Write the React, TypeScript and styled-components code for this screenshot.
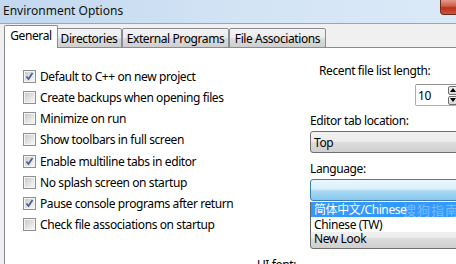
import React from 'react';
import styled, {createGlobalStyle} from 'styled-components';

const GlobalStyle = createGlobalStyle`
  html, body {
    margin: 0;
    padding: 0;
  }
  body {
    width: 456px;
    height: 264px;
    overflow: hidden;
    background: #f0f0f0;
    font-family: "Noto Sans", "Noto Sans CJK SC", sans-serif;
    font-size: 12px;
    letter-spacing: -0.4px;
    color: #000;
  }
`;

const Window = styled.div`
  display: flex;
  flex-direction: column;
  width: 456px;
  height: 264px;
  overflow: hidden;
  background: #f0f0f0;
`;

const TitleBar = styled.div`
  flex: none;
  height: 23px;
  display: flex;
  justify-content: space-between;
  align-items: flex-start;
  background: linear-gradient(to right, #c2d8ef, #d3e4f5 55%, #dbe9f7);
  border-bottom: 1px solid #9aa6b4;
`;

const Title = styled.span`
  padding: 3px 0 0 3px;
  line-height: 16px;
  letter-spacing: 0;
  color: #111;
`;

const CloseButton = styled.div`
  width: 15px;
  height: 14px;
  border: 1px solid #6d2a20;
  border-top: none;
  border-right: none;
  border-radius: 0 0 0 4px;
  background: linear-gradient(#e39a8c, #cf5a44 45%, #b8321d 55%, #c9533c);
`;

const TabStrip = styled.div`
  flex: none;
  height: 23px;
  display: flex;
  align-items: flex-end;
  padding-left: 4px;
`;

const Tab = styled.div<{$w: number; $active?: boolean}>`
  position: relative;
  box-sizing: border-box;
  width: ${p => p.$w}px;
  height: ${p => (p.$active ? 23 : 20)}px;
  margin: 0 ${p => (p.$active ? -2 : 0)}px -1px;
  z-index: ${p => (p.$active ? 1 : 0)};
  display: flex;
  align-items: center;
  justify-content: center;
  padding-bottom: ${p => (p.$active ? 3 : 0)}px;
  border: 1px solid #898c95;
  border-bottom: ${p => (p.$active ? 'none' : '1px solid #898c95')};
  border-radius: 2px 2px 0 0;
  background: ${p => (p.$active ? '#fff' : 'linear-gradient(#f3f3f3, #ebebeb 50%, #dddddd 50%, #cfcfcf)')};
  white-space: nowrap;
  &:first-child {
    margin-left: 0;
  }
`;

const Body = styled.div`
  flex: 1;
  display: grid;
  grid-template-columns: 305px 160px;
  grid-template-rows: auto auto;
  align-content: start;
  background: #fff;
  border-top: 1px solid #898c95;
  border-left: 1px solid #898c95;
  margin-left: 4px;
`;

const CheckList = styled.div`
  display: flex;
  flex-direction: column;
  padding: 18px 0 0 18px;
`;

const CheckRow = styled.label`
  display: flex;
  align-items: center;
  gap: 4px;
  height: 21.15px;
  white-space: nowrap;
`;

const Box = styled.span`
  box-sizing: border-box;
  width: 13px;
  height: 13px;
  flex: none;
  border: 1px solid #8e8f8f;
  padding: 1px;
  background: #f4f4f4;
  display: flex;
`;

const BoxInner = styled.span`
  flex: 1;
  background: linear-gradient(135deg, #cbcbcb, #f6f6f6);
  display: flex;
  align-items: center;
  justify-content: center;
`;

const RightCol = styled.div`
  display: flex;
  flex-direction: column;
  align-items: flex-start;
`;

const Label = styled.div<{$top: number; $left?: number}>`
  margin: ${p => p.$top}px 0 0 ${p => p.$left ?? 0}px;
  line-height: 16px;
  white-space: nowrap;
`;

const SpinBox = styled.div`
  box-sizing: border-box;
  margin: 5px 0 0 105px;
  width: 60px;
  height: 22px;
  display: flex;
  align-items: center;
  border: 1px solid #abadb3;
  border-top-color: #8e8f8f;
  border-radius: 2px;
  background: #fff;
  padding-left: 2px;
`;

const SpinValue = styled.span`
  width: 30px;
`;

const SpinButtons = styled.div`
  display: flex;
  flex-direction: column;
  gap: 1px;
`;

const SpinButton = styled.div`
  box-sizing: border-box;
  width: 10px;
  height: 9px;
  border: 1px solid #707070;
  border-radius: 2px;
  background: linear-gradient(#f2f2f2, #d6d6d6);
  display: flex;
  align-items: center;
  justify-content: center;
`;

const Combo = styled.div<{$hot?: boolean; $top: number}>`
  box-sizing: border-box;
  position: relative;
  margin-top: ${p => p.$top}px;
  width: 170px;
  height: 22px;
  display: flex;
  align-items: center;
  padding-left: 3px;
  border: 1px solid ${p => (p.$hot ? '#3c7fb1' : '#707070')};
  border-radius: 3px;
  background: ${p =>
    p.$hot
      ? 'linear-gradient(#eaf6fd, #d9f0fc 45%, #a9d9f4 55%, #88c8ec)'
      : 'linear-gradient(#f2f2f2, #ebebeb 50%, #dddddd 50%, #cfcfcf)'};
  ${p => (p.$hot ? 'z-index: 2;' : '')}
`;

const DropList = styled.div`
  position: absolute;
  left: -1px;
  top: 22px;
  width: 170px;
  background: #fff;
  border-left: 1px solid #646464;
  display: flex;
  flex-direction: column;
`;

const DropItem = styled.div<{$selected?: boolean}>`
  position: relative;
  height: 15px;
  line-height: 15px;
  padding-left: 3px;
  white-space: nowrap;
  color: ${p => (p.$selected ? '#fff' : '#000')};
  background: ${p => (p.$selected ? '#3399ff' : '#fff')};
`;

const Watermark = styled.span`
  position: absolute;
  left: 92px;
  top: 1px;
  font-size: 13px;
  line-height: 15px;
  color: rgba(255, 255, 255, 0.35);
  letter-spacing: 1px;
  pointer-events: none;
`;

const FontRow = styled.div`
  grid-column: 1 / 3;
  padding: 8px 0 0 252px;
  line-height: 16px;
`;

const CheckMark = () => (
  <svg width="9" height="9" viewBox="0 0 9 9">
    <path d="M1.5 4.5 L3.5 7 L7.5 1" fill="none" stroke="#4a5f96" strokeWidth="1.7" />
  </svg>
);

const Arrow = ({up}: {up?: boolean}) => (
  <svg width="6" height="4" viewBox="0 0 6 4">
    <path d={up ? 'M0 4 L3 0 L6 4 Z' : 'M0 0 L6 0 L3 4 Z'} fill="#000" />
  </svg>
);

const options: [string, boolean][] = [
  ['Default to C++ on new project', true],
  ['Create backups when opening files', false],
  ['Minimize on run', false],
  ['Show toolbars in full screen', false],
  ['Enable multiline tabs in editor', true],
  ['No splash screen on startup', false],
  ['Pause console programs after return', true],
  ['Check file associations on startup', false],
];

const tabs: [string, number][] = [
  ['General', 54],
  ['Directories', 66],
  ['External Programs', 107],
  ['File Associations', 97],
];

export default function App() {
  return (
    <>
      <GlobalStyle />
      <Window>
        <TitleBar>
          <Title>Environment Options</Title>
          <CloseButton />
        </TitleBar>
        <TabStrip>
          {tabs.map(([name, w], i) => (
            <Tab key={name} $w={w} $active={i === 0}>
              {name}
            </Tab>
          ))}
        </TabStrip>
        <Body>
          <CheckList>
            {options.map(([text, checked]) => (
              <CheckRow key={text}>
                <Box>
                  <BoxInner>{checked && <CheckMark />}</BoxInner>
                </Box>
                {text}
              </CheckRow>
            ))}
          </CheckList>
          <RightCol>
            <Label $top={15} $left={9}>
              Recent file list length:
            </Label>
            <SpinBox>
              <SpinValue>10</SpinValue>
              <SpinButtons>
                <SpinButton>
                  <Arrow up />
                </SpinButton>
                <SpinButton>
                  <Arrow />
                </SpinButton>
              </SpinButtons>
            </SpinBox>
            <Label $top={7}>Editor tab location:</Label>
            <Combo $top={2}>Top</Combo>
            <Label $top={8}>Language:</Label>
            <Combo $top={2} $hot>
              <DropList>
                <DropItem $selected>
                  简体中文/Chinese
                  <Watermark>搜狗指南</Watermark>
                </DropItem>
                <DropItem>Chinese (TW)</DropItem>
              </DropList>
            </Combo>
            <Label $top={8}>Theme:</Label>
            <Combo $top={2}>New Look</Combo>
          </RightCol>
          <FontRow>UI font:</FontRow>
        </Body>
      </Window>
    </>
  );
}
